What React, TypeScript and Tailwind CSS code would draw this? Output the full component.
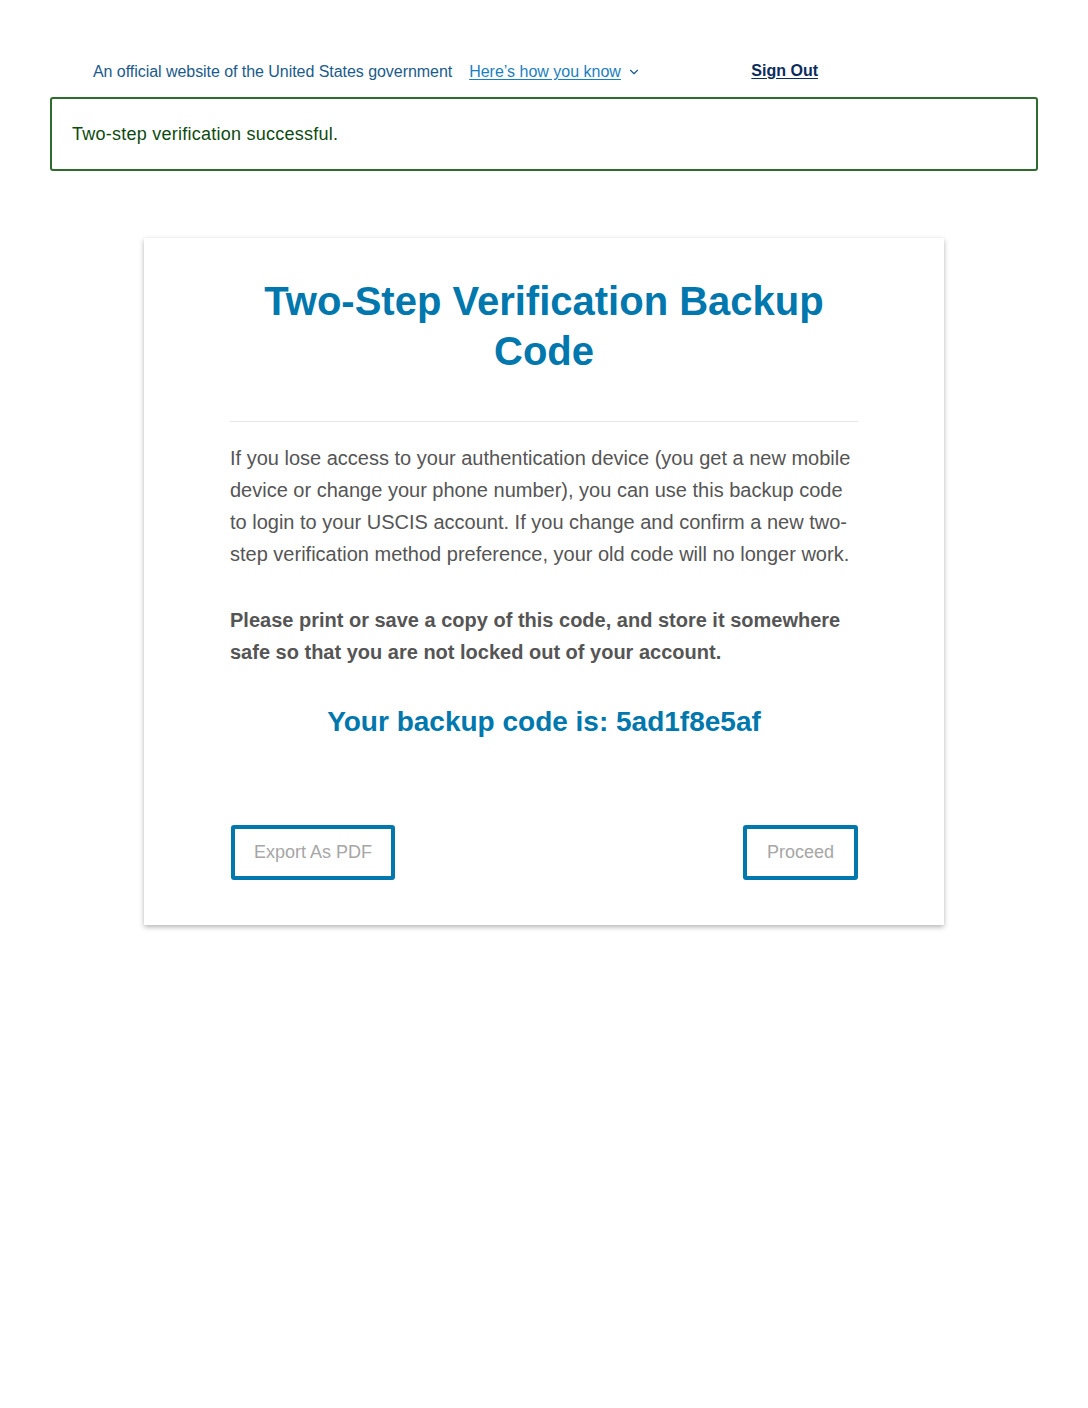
import { ChevronDown } from "lucide-react";

const font = { fontFamily: '"Liberation Sans", Arial, sans-serif' };

function GovBanner() {
  return (
    <div className="pt-[60px] pb-[13px]">
      <div className="ml-[93px] w-[725px] flex items-center justify-between">
        <div className="flex items-center text-[16px] leading-[24px]">
          <span className="text-[#1a5b8c] tracking-[-0.05px]">
            An official website of the United States government
          </span>
          <a
            href="#"
            className="ml-[17px] text-[#1a7fbf] underline underline-offset-2"
          >
            Here’s how you know{" "}
          </a>
          <ChevronDown
            className="ml-[6px] text-[#1a5b8c]"
            size={14}
            strokeWidth={2}
          />
        </div>
        <a
          href="#"
          className="-mt-[2px] text-[16px] leading-[24px] font-bold text-[#0b2d5c] underline underline-offset-2"
        >
          Sign Out
        </a>
      </div>
    </div>
  );
}

export default function App() {
  return (
    <div className="min-h-[1408px] bg-white" style={font}>
      <GovBanner />
      <div className="mx-[50px] border-2 border-[#2f6a2f] rounded-[3px] px-[20px] py-[22px]">
        <p className="text-[18px] leading-[26px] tracking-[0.25px] text-[#0d4a10]">
          Two-step verification successful.
        </p>
      </div>

      <div className="mt-[67px] mx-auto w-[800px] bg-white shadow-[0_2px_5px_rgba(0,0,0,0.3)] px-[86px] pt-[38px] pb-[45px]">
        <h1 className="text-center text-[40px] leading-[50px] font-bold text-[#0077ad]">
          Two-Step Verification Backup Code
        </h1>
        <hr className="mt-[45px] border-0 border-t border-[#e6e6e6]" />
        <p className="mt-[20px] text-[20px] leading-[32px] text-[#555555]">
          If you lose access to your authentication device (you get a new
          mobile device or change your phone number), you can use this backup
          code to login to your USCIS account. If you change and confirm a new
          two-step verification method preference, your old code will no longer
          work.
        </p>
        <p className="mt-[34px] text-[20px] leading-[32px] font-bold text-[#555555]">
          Please print or save a copy of this code, and store it somewhere safe
          so that you are not locked out of your account.
        </p>
        <h2 className="mt-[36px] text-center text-[28px] leading-[36px] font-bold text-[#0077ad]">
          Your backup code is: 5ad1f8e5af
        </h2>
        <div className="mt-[85px] flex items-center justify-between">
          <button
            type="button"
            className="ml-[1px] h-[55px] px-[19px] border-[4px] border-[#0077ad] rounded-[3px] text-[18px] text-[#a6a6a6] bg-white"
          >
            Export As PDF
          </button>
          <button
            type="button"
            className="h-[55px] px-[20px] border-[4px] border-[#0077ad] rounded-[3px] text-[18px] text-[#a6a6a6] bg-white"
          >
            Proceed
          </button>
        </div>
      </div>
    </div>
  );
}
